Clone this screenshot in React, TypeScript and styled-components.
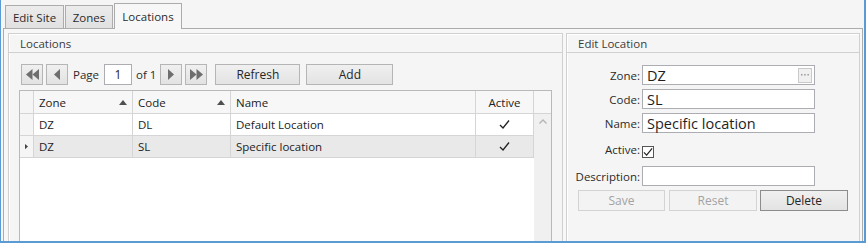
import React from 'react';
import styled, { createGlobalStyle } from 'styled-components';

const GlobalStyle = createGlobalStyle`
  html, body {
    margin: 0;
    padding: 0;
    background: #ffffff;
  }
  * {
    box-sizing: border-box;
  }
`;

const font = `'Open Sans', 'Noto Sans', 'DejaVu Sans', sans-serif`;

interface RowData {
  zone: string;
  code: string;
  name: string;
  active: boolean;
}

const rows: RowData[] = [
  { zone: 'DZ', code: 'DL', name: 'Default Location', active: true },
  { zone: 'DZ', code: 'SL', name: 'Specific location', active: true },
];

const columns = '14px 99px 98px 245px 58px';

const Window = styled.div`
  width: 866px;
  height: 243px;
  overflow: hidden;
  background: #f5f5f5;
  border-left: 1px solid #5b9bd5;
  border-right: 2px solid #5b9bd5;
  border-bottom: 2px solid #5b9bd5;
  padding: 0 1px 0 2px;
  display: flex;
  flex-direction: column;
  font-family: ${font};
  font-size: 11.5px;
  color: #262626;
`;

const TabStrip = styled.div`
  display: flex;
  align-items: flex-end;
  height: 28px;
  padding-left: 2px;
`;

const Tab = styled.div<{ $active?: boolean; $width: number }>`
  width: ${(p) => p.$width}px;
  height: ${(p) => (p.$active ? '26px' : '23px')};
  margin-right: ${(p) => (p.$active ? '0' : '1px')};
  display: flex;
  align-items: center;
  justify-content: center;
  border: 1px solid #acacac;
  border-bottom: none;
  background: ${(p) => (p.$active ? '#f7f7f7' : 'linear-gradient(#ececec, #e1e1e1)')};
  color: #2b2b2b;
  font-size: 11.5px;
  position: relative;
  top: ${(p) => (p.$active ? '1px' : '0')};
  z-index: ${(p) => (p.$active ? 1 : 0)};
`;

const TabBody = styled.div`
  flex: 1;
  display: flex;
  gap: 3px;
  padding: 4px 1px 0 4px;
  border: 1px solid #acacac;
  border-bottom: none;
  background: #f7f7f7;
  min-height: 0;
`;

const GroupBox = styled.div<{ $width: number }>`
  width: ${(p) => p.$width}px;
  flex: none;
  display: flex;
  flex-direction: column;
  border: 1px solid #d0d0d0;
  border-bottom: none;
  box-shadow: inset 1px 1px 0 #ffffff;
  background: #f5f5f5;
`;

const GroupHeader = styled.div`
  height: 19px;
  padding-left: 11px;
  display: flex;
  align-items: center;
  border-bottom: 1px solid #d0d0d0;
  color: #3c3c3c;
  font-size: 11.5px;
`;

const LocationsBody = styled.div`
  flex: 1;
  display: flex;
  flex-direction: column;
  padding: 11px 9px 0 11px;
  min-height: 0;
`;

const Toolbar = styled.div`
  display: flex;
  align-items: center;
  height: 21px;
  padding-left: 1px;
`;

const NavButton = styled.div<{ $gap?: number }>`
  width: 22px;
  height: 21px;
  margin-left: ${(p) => p.$gap ?? 0}px;
  border: 1px solid #b5b5b5;
  background: linear-gradient(#f0f0f0, #e2e2e2);
  display: flex;
  align-items: center;
  justify-content: center;
`;

const ToolText = styled.span<{ $gap: number }>`
  margin-left: ${(p) => p.$gap}px;
  font-size: 11.5px;
  color: #2b2b2b;
`;

const PageInput = styled.div`
  width: 28px;
  height: 21px;
  margin-left: 5px;
  border: 1px solid #abadb3;
  background: #ffffff;
  display: flex;
  align-items: center;
  justify-content: center;
  font-size: 12px;
`;

const Button = styled.div<{ $width: number; $gap?: number; $disabled?: boolean; $default?: boolean }>`
  width: ${(p) => p.$width}px;
  height: 21px;
  margin-left: ${(p) => p.$gap ?? 0}px;
  border: 1px solid ${(p) => (p.$disabled ? '#d3d3d3' : p.$default ? '#8c8c8c' : '#b5b5b5')};
  background: ${(p) => (p.$disabled ? '#f3f3f3' : 'linear-gradient(#f0f0f0, #e3e3e3)')};
  color: ${(p) => (p.$disabled ? '#a3a3a3' : '#262626')};
  display: flex;
  align-items: center;
  justify-content: center;
  font-size: 12px;
`;

const Grid = styled.div`
  flex: 1;
  margin-top: 5px;
  margin-left: -1px;
  width: 533px;
  display: flex;
  border: 1px solid #b9b9b9;
  border-bottom: none;
  background: #ffffff;
  min-height: 0;
`;

const Table = styled.div`
  width: 514px;
  display: flex;
  flex-direction: column;
`;

const Row = styled.div<{ $header?: boolean; $selected?: boolean }>`
  display: grid;
  grid-template-columns: ${columns};
  height: ${(p) => (p.$header ? '23px' : '22px')};
  background: ${(p) => (p.$header ? '#f7f7f7' : p.$selected ? '#e9e9e9' : '#ffffff')};
  border-bottom: 1px solid #d5d5d5;
`;

const Cell = styled.div<{ $center?: boolean; $rowHead?: boolean }>`
  display: flex;
  align-items: center;
  justify-content: ${(p) => (p.$center ? 'center' : 'space-between')};
  padding: 0 5px 0 ${(p) => (p.$rowHead ? '0' : '5px')};
  border-right: 1px solid #d5d5d5;
  background: ${(p) => (p.$rowHead ? '#f5f5f5' : 'transparent')};
  font-size: 11.5px;
  color: #222222;
  white-space: nowrap;
`;

const ScrollColumn = styled.div`
  width: 17px;
  display: flex;
  flex-direction: column;
`;

const ScrollHead = styled.div`
  height: 23px;
  background: #f7f7f7;
  border-bottom: 1px solid #d5d5d5;
`;

const ScrollTrack = styled.div`
  flex: 1;
  background: #f0f0f0;
  display: flex;
  justify-content: center;
  padding-top: 5px;
`;

const EditBody = styled.div`
  padding: 12px 0 0 11px;
  display: flex;
  flex-direction: column;
`;

const Form = styled.div`
  display: grid;
  grid-template-columns: 62px 174px;
  grid-template-rows: 20px 20px 20px 25px 20px;
  column-gap: 2px;
  row-gap: 4px;
  align-items: center;
`;

const Label = styled.div`
  justify-self: end;
  font-size: 11.5px;
  color: #2b2b2b;
  white-space: nowrap;
`;

const TextBox = styled.div`
  height: 20px;
  width: 173px;
  border: 1px solid #abadb3;
  background: #ffffff;
  display: flex;
  align-items: center;
  justify-content: space-between;
  padding: 0 2px 0 4px;
  font-size: 14.5px;
  color: #1e1e1e;
`;

const Ellipsis = styled.div`
  width: 14px;
  height: 15px;
  border: 1px solid #c9c9c9;
  background: #f0f0f0;
  display: flex;
  align-items: center;
  justify-content: center;
`;

const CheckBox = styled.div`
  width: 12px;
  height: 12px;
  margin-top: 5px;
  border: 1px solid #555555;
  background: #ffffff;
  display: flex;
  align-items: center;
  justify-content: center;
`;

const ButtonRow = styled.div`
  display: flex;
  margin-top: 4px;
`;

const Tri = ({ dir }: { dir: 'left' | 'right' }) => (
  <svg width="6" height="11" viewBox="0 0 6 11">
    <polygon points={dir === 'left' ? '6,0 6,11 0,5.5' : '0,0 0,11 6,5.5'} fill="#6e6e6e" />
  </svg>
);

const DoubleTri = ({ dir }: { dir: 'left' | 'right' }) => (
  <svg width="13" height="11" viewBox="0 0 13 11">
    {dir === 'left' ? (
      <>
        <polygon points="6.5,0 6.5,11 0,5.5" fill="#6e6e6e" />
        <polygon points="13,0 13,11 6.5,5.5" fill="#6e6e6e" />
      </>
    ) : (
      <>
        <polygon points="0,0 0,11 6.5,5.5" fill="#6e6e6e" />
        <polygon points="6.5,0 6.5,11 13,5.5" fill="#6e6e6e" />
      </>
    )}
  </svg>
);

const SortArrow = () => (
  <svg width="8" height="5" viewBox="0 0 8 5">
    <polygon points="0,5 8,5 4,0" fill="#505050" />
  </svg>
);

const Check = ({ size = 11, color = '#222' }: { size?: number; color?: string }) => (
  <svg width={size} height={size} viewBox="0 0 11 11">
    <path d="M1 6 L4 9 L10 1.5" fill="none" stroke={color} strokeWidth="1.3" />
  </svg>
);

const RowPointer = () => (
  <svg width="4" height="7" viewBox="0 0 4 7" style={{ marginLeft: 5 }}>
    <polygon points="0,0 4,3.5 0,7" fill="#444" />
  </svg>
);

const UpChevron = () => (
  <svg width="8" height="5" viewBox="0 0 8 5">
    <path d="M0.5 4.5 L4 1 L7.5 4.5" fill="none" stroke="#b4b4b4" strokeWidth="1.4" />
  </svg>
);

const Dots = () => (
  <svg width="8" height="2" viewBox="0 0 8 2">
    <rect x="0" y="0" width="1.5" height="1.5" fill="#9a9a9a" />
    <rect x="3.2" y="0" width="1.5" height="1.5" fill="#9a9a9a" />
    <rect x="6.4" y="0" width="1.5" height="1.5" fill="#9a9a9a" />
  </svg>
);

const App: React.FC = () => {
  return (
    <React.Fragment>
      <GlobalStyle />
      <Window>
        <TabStrip>
          <Tab $width={59}>Edit Site</Tab>
          <Tab $width={48}>Zones</Tab>
          <Tab $width={68} $active>
            Locations
          </Tab>
        </TabStrip>
        <TabBody>
          <GroupBox $width={555}>
            <GroupHeader>Locations</GroupHeader>
            <LocationsBody>
              <Toolbar>
                <NavButton>
                  <DoubleTri dir="left" />
                </NavButton>
                <NavButton $gap={3}>
                  <Tri dir="left" />
                </NavButton>
                <ToolText $gap={5}>Page</ToolText>
                <PageInput>1</PageInput>
                <ToolText $gap={4}>of 1</ToolText>
                <NavButton $gap={4}>
                  <Tri dir="right" />
                </NavButton>
                <NavButton $gap={3}>
                  <DoubleTri dir="right" />
                </NavButton>
                <Button $width={85} $gap={8}>
                  Refresh
                </Button>
                <Button $width={87} $gap={6}>
                  Add
                </Button>
              </Toolbar>
              <Grid>
                <Table>
                  <Row $header>
                    <Cell $rowHead />
                    <Cell>
                      Zone <SortArrow />
                    </Cell>
                    <Cell>
                      Code <SortArrow />
                    </Cell>
                    <Cell>Name</Cell>
                    <Cell $center>Active</Cell>
                  </Row>
                  {rows.map((r, i) => (
                    <Row key={r.code} $selected={i === 1}>
                      <Cell $rowHead>{i === 1 && <RowPointer />}</Cell>
                      <Cell>{r.zone}</Cell>
                      <Cell>{r.code}</Cell>
                      <Cell>{r.name}</Cell>
                      <Cell $center>{r.active && <Check />}</Cell>
                    </Row>
                  ))}
                </Table>
                <ScrollColumn>
                  <ScrollHead />
                  <ScrollTrack>
                    <UpChevron />
                  </ScrollTrack>
                </ScrollColumn>
              </Grid>
            </LocationsBody>
          </GroupBox>
          <GroupBox $width={294}>
            <GroupHeader>Edit Location</GroupHeader>
            <EditBody>
              <Form>
                <Label>Zone:</Label>
                <TextBox>
                  DZ
                  <Ellipsis>
                    <Dots />
                  </Ellipsis>
                </TextBox>
                <Label>Code:</Label>
                <TextBox>SL</TextBox>
                <Label>Name:</Label>
                <TextBox>Specific location</TextBox>
                <Label>Active:</Label>
                <CheckBox>
                  <Check size={10} color="#222" />
                </CheckBox>
                <Label>Description:</Label>
                <TextBox />
              </Form>
              <ButtonRow>
                <Button $width={87} $disabled>
                  Save
                </Button>
                <Button $width={88} $gap={4} $disabled>
                  Reset
                </Button>
                <Button $width={88} $gap={3} $default>
                  Delete
                </Button>
              </ButtonRow>
            </EditBody>
          </GroupBox>
        </TabBody>
      </Window>
    </React.Fragment>
  );
};

export default App;
